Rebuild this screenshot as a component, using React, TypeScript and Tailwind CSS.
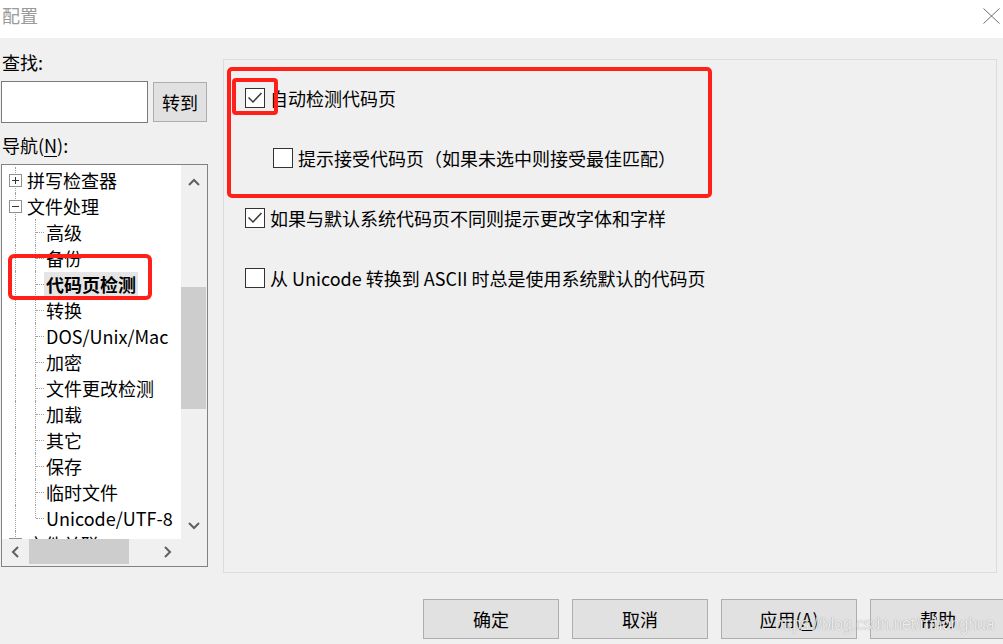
import React from 'react';

const FONT = "font-['Noto_Sans_CJK_SC','Noto_Sans',sans-serif]";

function Chevron({ dir }: { dir: 'up' | 'down' | 'left' | 'right' }) {
  const paths: Record<string, string> = {
    up: 'M1 7 L6 2 L11 7',
    down: 'M1 2 L6 7 L11 2',
    left: 'M7 1 L2 6 L7 11',
    right: 'M2 1 L7 6 L2 11',
  };
  const vertical = dir === 'up' || dir === 'down';
  return (
    <svg
      width={vertical ? 12 : 9}
      height={vertical ? 9 : 12}
      viewBox={vertical ? '0 0 12 9' : '0 0 9 12'}
      fill="none"
      stroke="#606060"
      strokeWidth="2"
    >
      <path d={paths[dir]} />
    </svg>
  );
}

function RootRow({ label, expander }: { label: string; expander?: 'plus' | 'minus' }) {
  return (
    <div className="flex h-[26px] items-center">
      <div className="relative h-full w-[25px] shrink-0">
        <span className="absolute left-[13px] top-0 h-full border-l border-dotted border-[#a0a0a0]" />
        {expander && (
          <span className="absolute left-[7px] top-[7px] flex h-[13px] w-[13px] items-center justify-center border border-[#919191] bg-white">
            <svg width="9" height="9" viewBox="0 0 9 9" stroke="#333" strokeWidth="1" shapeRendering="crispEdges">
              <path d="M1 4.5 H8" />
              {expander === 'plus' && <path d="M4.5 1 V8" />}
            </svg>
          </span>
        )}
      </div>
      <span className="whitespace-nowrap leading-[24px]">{label}</span>
    </div>
  );
}

function ChildRow({ label, last, selected }: { label: string; last?: boolean; selected?: boolean }) {
  return (
    <div className="flex h-[26px] items-center">
      <div className="relative h-full w-[25px] shrink-0">
        <span className="absolute left-[13px] top-0 h-full border-l border-dotted border-[#a0a0a0]" />
      </div>
      <div className="relative h-full w-[17px] shrink-0">
        <span
          className={`absolute left-[8px] top-0 border-l border-dotted border-[#a0a0a0] ${last ? 'h-[13px]' : 'h-full'}`}
        />
        <span className="absolute left-[9px] top-[13px] w-[8px] border-t border-dotted border-[#a0a0a0]" />
      </div>
      <span
        className={`h-[24px] whitespace-nowrap px-[2px] leading-[24px] ${selected ? 'bg-[#e5e5e5] font-bold' : ''}`}
      >
        {label}
      </span>
    </div>
  );
}

function CheckBox({ checked }: { checked?: boolean }) {
  return (
    <span className="flex h-[20px] w-[20px] shrink-0 items-center justify-center border border-[#333] bg-white">
      {checked && (
        <svg width="18" height="18" viewBox="0 0 18 18" fill="none" stroke="#3a3a3a" strokeWidth="1.5">
          <path d="M2.5 8.5 L7 13 L15.5 4" />
        </svg>
      )}
    </span>
  );
}

function Option({ checked, label, indent }: { checked?: boolean; label: string; indent?: boolean }) {
  return (
    <div className={`flex h-[30px] items-center gap-[5px] ${indent ? 'pl-[49px]' : 'pl-[21px]'}`}>
      <CheckBox checked={checked} />
      <span className="whitespace-nowrap text-[18px] leading-[24px]">{label}</span>
    </div>
  );
}

function DlgButton({ children }: { children: React.ReactNode }) {
  return (
    <div className="flex h-[40px] w-[136px] shrink-0 items-center justify-center border border-[#adadad] bg-[#e1e1e1] text-[18px]">
      {children}
    </div>
  );
}

const childItems = [
  '高级',
  '备份',
  '代码页检测',
  '转换',
  'DOS/Unix/Mac',
  '加密',
  '文件更改检测',
  '加载',
  '其它',
  '保存',
  '临时文件',
  'Unicode/UTF-8',
];

export default function App() {
  return (
    <div className={`relative h-[644px] w-[1003px] overflow-hidden bg-[#f0f0f0] text-black ${FONT}`}>
      {/* Title bar */}
      <div className="flex h-[38px] items-start justify-between bg-white">
        <span className="ml-[2px] mt-[3px] text-[18px] leading-[24px] text-[#9a9a9a]">配置</span>
        <svg className="mr-[3px] mt-[8px]" width="17" height="16" viewBox="0 0 17 16" stroke="#6f6f6f" strokeWidth="1">
          <path d="M0.5 0.5 L16.5 15.5 M16.5 0.5 L0.5 15.5" />
        </svg>
      </div>

      <div className="flex">
        {/* Left column */}
        <div className="w-[208px] shrink-0 pl-[1px]">
          <div className="ml-[1px] mt-[12px] h-[24px] text-[18px] leading-[24px]">查找:</div>
          <div className="mt-[7px] flex items-start gap-[5px]">
            <div className="h-[42px] w-[147px] border border-[#7a7a7a] bg-white" />
            <div className="mt-[1px] flex h-[40px] w-[54px] items-center justify-center border border-[#adadad] bg-[#e1e1e1] text-[18px]">
              转到
            </div>
          </div>
          <div className="ml-[1px] mt-[10px] h-[24px] text-[18px] leading-[24px]">
            导航(<span className="underline underline-offset-[3px]">N</span>):
          </div>
          {/* Tree view */}
          <div className="mt-[7px] grid h-[403px] w-[207px] grid-cols-[179px_26px] grid-rows-[374px_27px] border border-[#828282] text-[18px]">
            <div className="overflow-hidden bg-white pt-[2px]">
              <RootRow label="拼写检查器" expander="plus" />
              <RootRow label="文件处理" expander="minus" />
              {childItems.map((c, i) => (
                <ChildRow
                  key={c}
                  label={c}
                  selected={c === '代码页检测'}
                  last={i === childItems.length - 1}
                />
              ))}
              <RootRow label="文件关联" expander="plus" />
            </div>
            <div className="flex flex-col bg-[#f0f0f0]">
              <div className="flex h-[34px] w-[25px] items-center justify-center">
                <Chevron dir="up" />
              </div>
              <div className="h-[88px]" />
              <div className="h-[122px] w-[25px] bg-[#cdcdcd]" />
              <div className="h-[103px]" />
              <div className="flex h-[27px] w-[25px] items-center justify-center">
                <Chevron dir="down" />
              </div>
            </div>
            <div className="flex items-start bg-[#f0f0f0]">
              <div className="flex h-[25px] w-[27px] items-center justify-center">
                <Chevron dir="left" />
              </div>
              <div className="h-[25px] w-[100px] bg-[#cdcdcd]" />
              <div className="flex-1" />
              <div className="flex h-[25px] w-[27px] items-center justify-center">
                <Chevron dir="right" />
              </div>
            </div>
            <div className="bg-[#f0f0f0]" />
          </div>
        </div>

        {/* Right panel */}
        <div className="relative ml-[15px] mt-[21px] h-[514px] w-[774px] shrink-0 border border-[#dcdcdc]">
          <div className="flex flex-col gap-[30px] pt-[23px]">
            <Option checked label="自动检测代码页" />
            <Option indent label="提示接受代码页（如果未选中则接受最佳匹配）" />
            <Option checked label="如果与默认系统代码页不同则提示更改字体和字样" />
            <Option label="从 Unicode 转换到 ASCII 时总是使用系统默认的代码页" />
          </div>
          {/* red annotations */}
          <div className="pointer-events-none absolute left-[3px] top-[7px] h-[131px] w-[485px] rounded-[5px] border-[4px] border-[#ff2119]" />
          <div className="pointer-events-none absolute left-[8px] top-[18px] h-[37px] w-[46px] rounded-[4px] border-[4px] border-[#ff2119]" />
        </div>
      </div>

      {/* Buttons */}
      <div className="mt-[26px] flex gap-[13px] pl-[423px]">
        <DlgButton>确定</DlgButton>
        <DlgButton>取消</DlgButton>
        <DlgButton>
          应用(<span className="underline underline-offset-[3px]">A</span>)
        </DlgButton>
        <DlgButton>帮助</DlgButton>
      </div>

      {/* tree red annotation */}
      <div className="pointer-events-none absolute left-[8px] top-[254px] h-[46px] w-[144px] rounded-[6px] border-[4px] border-[#ff2119]" />

      {/* watermark */}
      <div className="pointer-events-none absolute left-[775px] top-[612px] origin-left scale-x-[0.87] whitespace-nowrap font-['Liberation_Sans',sans-serif] text-[18px] leading-[24px] text-white/85 [text-shadow:0_0_1px_rgba(0,0,0,0.45)]">
        https://blog.csdn.net/ruhonghua
      </div>
    </div>
  );
}
